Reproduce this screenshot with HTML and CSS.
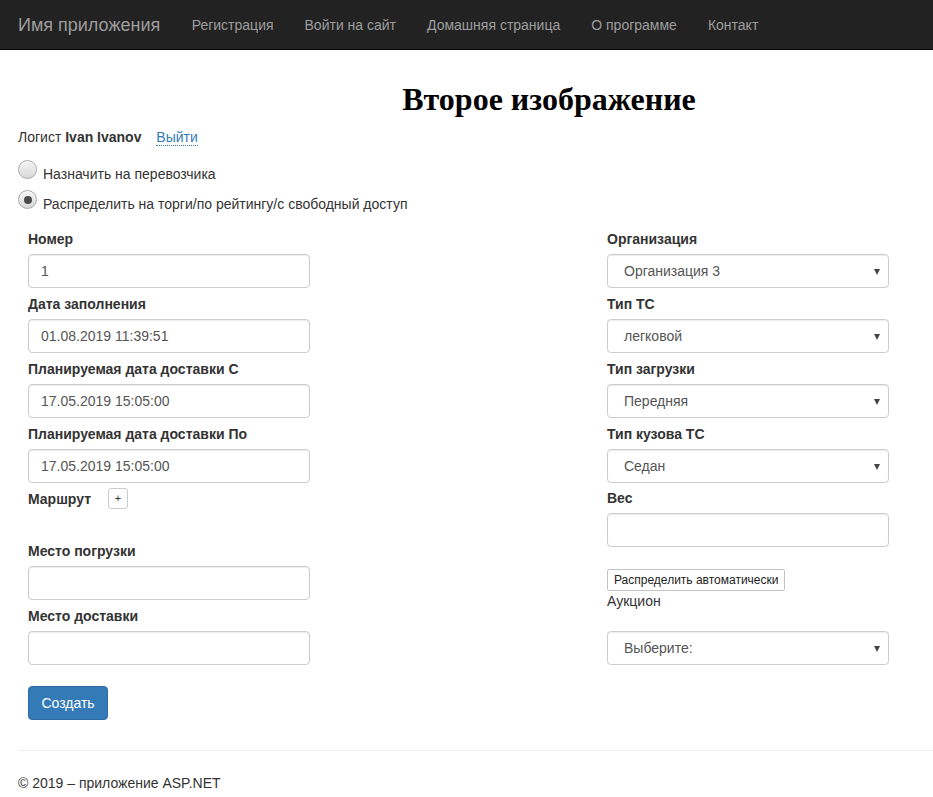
FILE: index.html
```html
<!DOCTYPE html>
<html lang="ru">
<head>
<meta charset="utf-8">
<title>Создать</title>
<link rel="stylesheet" href="styles.css">
</head>
<body>
<header class="navbar">
  <a class="brand" href="#">Имя приложения</a>
  <nav class="nav">
    <a href="#">Регистрация</a>
    <a href="#">Войти на сайт</a>
    <a href="#">Домашняя страница</a>
    <a href="#">О программе</a>
    <a href="#">Контакт</a>
  </nav>
</header>
<main class="page">
  <h1 class="title">Второе изображение</h1>
  <p class="user">Логист <b>Ivan Ivanov</b> <a class="logout" href="#">Выйти</a></p>
  <div class="radios">
    <label class="radio-row"><span class="radio"></span><span class="radio-text">Назначить на перевозчика</span></label>
    <label class="radio-row"><span class="radio checked"></span><span class="radio-text">Распределить на торги/по рейтингу/с свободный доступ</span></label>
  </div>
  <form class="form">
    <div class="col">
      <div class="group"><label class="lbl">Номер</label><div class="input">1</div></div>
      <div class="group"><label class="lbl">Дата заполнения</label><div class="input">01.08.2019 11:39:51</div></div>
      <div class="group"><label class="lbl">Планируемая дата доставки С</label><div class="input">17.05.2019 15:05:00</div></div>
      <div class="group"><label class="lbl">Планируемая дата доставки По</label><div class="input">17.05.2019 15:05:00</div></div>
      <div class="route"><label class="lbl">Маршрут</label><span class="plus">+</span></div>
      <div class="group"><label class="lbl">Место погрузки</label><div class="input"></div></div>
      <div class="group"><label class="lbl">Место доставки</label><div class="input"></div></div>
    </div>
    <div class="col">
      <div class="group"><label class="lbl">Организация</label><div class="select">Организация 3</div></div>
      <div class="group"><label class="lbl">Тип ТС</label><div class="select">легковой</div></div>
      <div class="group"><label class="lbl">Тип загрузки</label><div class="select">Передняя</div></div>
      <div class="group"><label class="lbl">Тип кузова ТС</label><div class="select">Седан</div></div>
      <div class="group weight"><label class="lbl">Вес</label><div class="input"></div></div>
      <span class="auto-btn">Распределить автоматически</span>
      <div class="auction">Аукцион</div>
      <div class="select">Выберите:</div>
    </div>
  </form>
  <span class="btn-primary">Создать</span>
  <hr class="sep">
  <footer class="footer">© 2019 – приложение ASP.NET</footer>
</main>
</body>
</html>
```
FILE: styles.css
```css
* { box-sizing: border-box; }
html, body { margin: 0; padding: 0; }
body {
  font-family: "Liberation Sans", Arial, sans-serif;
  font-size: 14px;
  line-height: 20px;
  color: #333;
  background: #fff;
  overflow: hidden;
}
.navbar {
  height: 50px;
  background: #222;
  border-bottom: 1px solid #080808;
  display: flex;
  align-items: center;
  padding-left: 18px;
}
.brand {
  color: #9d9d9d;
  font-size: 18px;
  text-decoration: none;
  padding-right: 16px;
}
.nav { display: flex; }
.nav a {
  color: #9d9d9d;
  text-decoration: none;
  padding: 0 15.5px;
  font-size: 14px;
}
.page { padding-left: 18px; }
.title {
  font-family: "Liberation Serif", "Times New Roman", serif;
  font-weight: bold;
  font-size: 32px;
  line-height: 35px;
  margin: 32px 0 0 0;
  padding-left: 147px;
  text-align: center;
  color: #000;
}
.user { margin: 10px 0 0 0; }
.logout {
  color: #337ab7;
  text-decoration: none;
  border-bottom: 1px dotted #337ab7;
  margin-left: 11px;
}
.radios { margin-top: 11px; }
.radio-row {
  display: flex;
  align-items: flex-start;
  height: 30px;
}
.radio {
  width: 19px;
  height: 19px;
  margin-top: 2px;
  border-radius: 50%;
  border: 1px solid #a8a8a8;
  background: linear-gradient(#f4f4f4, #d9d9d9);
  box-shadow: inset 0 1px 1px rgba(255,255,255,.8);
  display: flex;
  align-items: center;
  justify-content: center;
}
.radio.checked::after {
  content: "";
  width: 8px;
  height: 8px;
  border-radius: 50%;
  background: #4a4a4a;
}
.radio-text { margin: 6px 0 0 6px; }
.form {
  display: grid;
  grid-template-columns: 579px 282px;
  padding-left: 10px;
  margin-top: 11px;
}
.col { display: flex; flex-direction: column; align-items: flex-start; }
.group { margin-bottom: 6px; width: 282px; }
.group.weight { margin-top: -1px; }
.lbl {
  display: block;
  font-weight: bold;
  margin-bottom: 5px;
}
.input, .select {
  width: 282px;
  height: 34px;
  border: 1px solid #ccc;
  border-radius: 4px;
  padding: 6px 12px;
  color: #555;
  box-shadow: inset 0 1px 1px rgba(0,0,0,.075);
  background: #fff;
}
.select {
  position: relative;
  padding-left: 16px;
}
.select::after {
  content: "";
  position: absolute;
  right: 8px;
  top: 14px;
  border-left: 3.5px solid transparent;
  border-right: 3.5px solid transparent;
  border-top: 6px solid #444;
}
.route {
  display: flex;
  align-items: flex-start;
  height: 21px;
  margin-bottom: 31px;
}
.route .lbl { margin: 0; }
.plus {
  margin-left: 17px;
  margin-top: -1px;
  width: 20px;
  height: 21px;
  border: 1px solid #ccc;
  border-radius: 3px;
  font-size: 11px;
  line-height: 19px;
  text-align: center;
  color: #333;
  background: #fff;
}
.auto-btn {
  margin-top: 16px;
  height: 22px;
  font-size: 12px;
  line-height: 20px;
  padding: 0 6px;
  border: 1px solid #c4c4c4;
  border-radius: 2px;
  background: #fff;
  color: #222;
}
.auction { margin-bottom: 20px; }
.btn-primary {
  display: inline-block;
  margin: 15px 0 0 10px;
  height: 34px;
  width: 80px;
  text-align: center;
  padding: 6px 0;
  background: #337ab7;
  border: 1px solid #2e6da4;
  border-radius: 4px;
  color: #fff;
}
.sep {
  border: 0;
  border-top: 1px solid #eee;
  margin: 30px 0 0 0;
}
.footer { margin-top: 22px; }
```
